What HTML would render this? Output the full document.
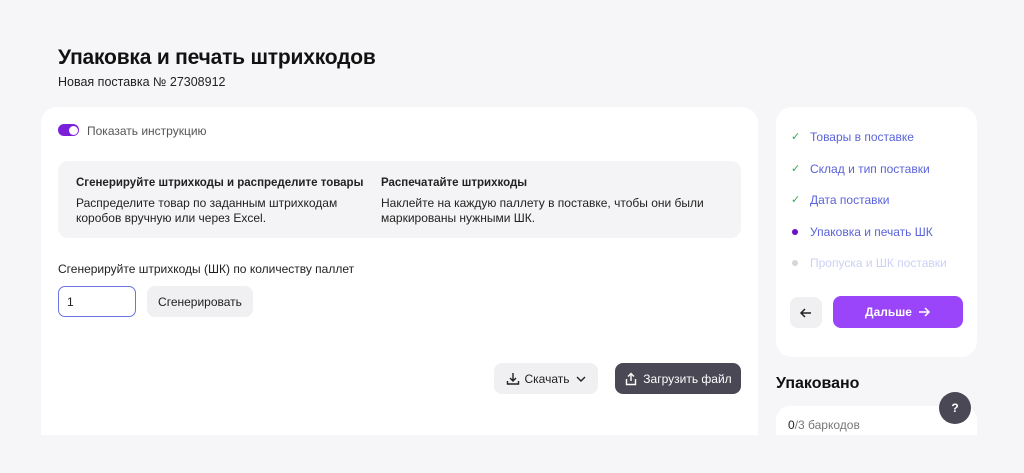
<!DOCTYPE html>
<html><head><meta charset="utf-8"><style>
*{box-sizing:border-box;margin:0;padding:0}
body{width:1024px;height:473px;background:#f6f6f9;font-family:"Liberation Sans",sans-serif;color:#222;position:relative;overflow:hidden}
.a{position:absolute}
h1{position:absolute;left:58px;top:46px;font-size:21px;font-weight:bold;color:#111;letter-spacing:-0.2px}
.sub{left:58px;top:75px;font-size:12.5px;color:#222}
.card{left:41px;top:107px;width:717px;height:328px;background:#fff;border-radius:16px 16px 0 0}
.tog{left:58px;top:124px;width:21px;height:12px;border-radius:6px;background:#7b1fd8}
.tog:after{content:"";position:absolute;right:1.5px;top:1.5px;width:9px;height:9px;border-radius:50%;background:#fff}
.info{left:58px;top:161px;width:683px;height:77px;background:#f4f4f6;border-radius:10px}
.t{font-size:11.5px;font-weight:bold;color:#222}
.p{font-size:12px;color:#222;line-height:15px}
.btn{border-radius:8px;font-size:12px;display:flex;align-items:center;justify-content:center;gap:5px}
.step{left:810px;font-size:12px;color:#5a63d9}
.ck{left:791px;color:#3aa55a;font-size:11px}
.dot{left:792px;width:6px;height:6px;border-radius:50%}
</style></head><body>
<h1>Упаковка и печать штрихкодов</h1>
<div class="a sub">Новая поставка № 27308912</div>
<div class="a card"></div>
<div class="a tog"></div>
<div class="a" style="left:87px;top:124px;font-size:12px;color:#555">Показать инструкцию</div>
<div class="a info"></div>
<div class="a t" style="left:76px;top:177px">Сгенерируйте штрихкоды и распределите товары</div>
<div class="a p" style="left:76px;top:196px">Распределите товар по заданным штрихкодам<br>коробов вручную или через Excel.</div>
<div class="a t" style="left:381px;top:177px">Распечатайте штрихкоды</div>
<div class="a p" style="left:381px;top:196px">Наклейте на каждую паллету в поставке, чтобы они были<br>маркированы нужными ШК.</div>
<div class="a" style="left:58px;top:262px;font-size:12px;color:#222">Сгенерируйте штрихкоды (ШК) по количеству паллет</div>
<div class="a" style="left:58px;top:286px;width:78px;height:31px;border:1.5px solid #6b74e3;border-radius:7px;font-size:12px;padding:8px 0 0 8px">1</div>
<div class="a btn" style="left:147px;top:286px;width:106px;height:31px;background:#f0f0f2">Сгенерировать</div>
<div class="a btn" style="left:494px;top:363px;width:104px;height:31px;background:#f0f0f2">
<svg width="14" height="14" viewBox="0 0 14 14" fill="none" stroke="#222" stroke-width="1.4"><path d="M7 1v8M4 6l3 3 3-3M1.5 9v3h11V9"/></svg>Скачать
<svg width="12" height="12" viewBox="0 0 12 12" fill="none" stroke="#222" stroke-width="1.4"><path d="M2 4l4 4 4-4"/></svg></div>
<div class="a btn" style="left:615px;top:363px;width:126px;height:31px;background:#4a4854;color:#fff">
<svg width="14" height="14" viewBox="0 0 14 14" fill="none" stroke="#fff" stroke-width="1.4"><path d="M7 9V1.5M4 4.5l3-3 3 3M2.5 7v5.5h9V7"/></svg>Загрузить файл</div>

<div class="a" style="left:776px;top:107px;width:201px;height:250px;background:#fff;border-radius:16px"></div>
<div class="a ck" style="top:130px">✓</div><div class="a step" style="top:130px">Товары в поставке</div>
<div class="a ck" style="top:162px">✓</div><div class="a step" style="top:162px">Склад и тип поставки</div>
<div class="a ck" style="top:193px">✓</div><div class="a step" style="top:193px">Дата поставки</div>
<div class="a dot" style="top:229px;background:#6a12c8"></div><div class="a step" style="top:225px">Упаковка и печать ШК</div>
<div class="a dot" style="top:260px;background:#d5d5da"></div><div class="a step" style="top:256px;color:#cdd0f6">Пропуска и ШК поставки</div>
<div class="a btn" style="left:790px;top:297px;width:32px;height:31px;background:#f0f0f2">
<svg width="14" height="14" viewBox="0 0 14 14" fill="none" stroke="#222" stroke-width="1.5"><path d="M12 7H2M6 3L2 7l4 4"/></svg></div>
<div class="a btn" style="left:833px;top:296px;width:130px;height:32px;background:#9b45fb;color:#fff;font-weight:bold">Дальше
<svg width="14" height="14" viewBox="0 0 14 14" fill="none" stroke="#fff" stroke-width="1.5"><path d="M2 7h10M8 3l4 4-4 4"/></svg></div>
<div class="a" style="left:776px;top:375px;font-size:16px;font-weight:bold;color:#111">Упаковано</div>
<div class="a" style="left:776px;top:406px;width:201px;height:29px;background:#fff;border-radius:14px 14px 0 0"></div>
<div class="a" style="left:788px;top:418px;font-size:12px;color:#777"><span style="color:#222">0</span>/3 баркодов</div>
<div class="a" style="left:939px;top:392px;width:32px;height:32px;border-radius:50%;background:#4a4854;color:#fff;font-size:12px;font-weight:bold;text-align:center;line-height:32px">?</div>
</body></html>
